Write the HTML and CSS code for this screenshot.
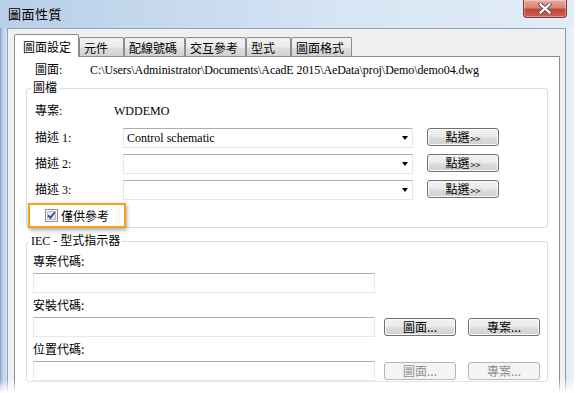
FILE: index.html
```html
<!DOCTYPE html>
<html lang="zh-Hant">

<head>
    <meta charset="utf-8">
    <meta name="viewport" content="width=device-width, initial-scale=1.0">
    <title>圖面性質</title>
    <link rel="stylesheet" href="styles.css">
</head>

<body>
    <div class="window">
        <div class="titlebar">
            <h1>圖面性質</h1>
            <button class="close">
                <svg width="14" height="11" viewBox="0 0 14 11">
                    <path d="M2.5 1.5 L11.5 9.5 M11.5 1.5 L2.5 9.5" stroke="#5d5d5d" stroke-width="4.2" stroke-linecap="square" fill="none" />
                    <path d="M2.5 1.5 L11.5 9.5 M11.5 1.5 L2.5 9.5" stroke="#fff" stroke-width="2.2" stroke-linecap="square" fill="none" />
                </svg>
            </button>
        </div>
        <div class="frame">
            <div class="client">
                <nav class="tabs">
                    <span class="tab selected">圖面設定</span>
                    <span class="tab">元件</span>
                    <span class="tab">配線號碼</span>
                    <span class="tab">交互參考</span>
                    <span class="tab">型式</span>
                    <span class="tab">圖面格式</span>
                </nav>
                <section class="page">
                    <p class="path"><span class="path-label">圖面:</span>C:\Users\Administrator\Documents\AcadE 2015\AeData\proj\Demo\demo04.dwg</p>

                    <fieldset class="group drawing">
                        <legend>圖檔</legend>
                        <p class="project"><span class="project-label">專案:</span>WDDEMO</p>
                        <div class="desc-grid">
                            <span>描述 1:</span>
                            <div class="combo">Control schematic<span class="arrow"></span></div>
                            <button class="btn">點選<small>&gt;&gt;</small></button>

                            <span>描述 2:</span>
                            <div class="combo"><span class="arrow"></span></div>
                            <button class="btn">點選<small>&gt;&gt;</small></button>

                            <span>描述 3:</span>
                            <div class="combo"><span class="arrow"></span></div>
                            <button class="btn">點選<small>&gt;&gt;</small></button>
                        </div>
                        <label class="note">
                            <svg class="check" width="13" height="13" viewBox="0 0 13 13">
                                <rect x="0.5" y="0.5" width="12" height="12" fill="#fff" stroke="#8e8f8f" />
                                <rect x="2.5" y="2.5" width="8" height="8" fill="#e6e9ee" stroke="#b9bdc3" />
                                <path d="M3.2 6.4 L5.4 8.8 L9.8 3.2" stroke="#2b4a8c" stroke-width="1.8" fill="none" />
                            </svg>
                            僅供參考
                        </label>
                    </fieldset>

                    <fieldset class="group iec">
                        <legend>IEC - 型式指示器</legend>
                        <p class="field-label">專案代碼:</p>
                        <div class="field-row">
                            <div class="textbox"></div>
                        </div>
                        <p class="field-label">安裝代碼:</p>
                        <div class="field-row">
                            <div class="textbox"></div>
                            <button class="btn">圖面...</button>
                            <button class="btn">專案...</button>
                        </div>
                        <p class="field-label">位置代碼:</p>
                        <div class="field-row">
                            <div class="textbox"></div>
                            <button class="btn" disabled>圖面...</button>
                            <button class="btn" disabled>專案...</button>
                        </div>
                    </fieldset>
                </section>
            </div>
        </div>
    </div>
    <div class="fade"></div>
</body>

</html>
```

FILE: styles.css
```css
body {
    margin: 0;
    background-color: #fff;
    font-family: "Liberation Serif", "Noto Sans CJK TC", serif;
    font-size: 12px;
    line-height: 16px;
    color: #000;
    overflow: hidden;
}

p {
    margin: 0;
}

.window {
    width: 574px;
    height: 393px;
    display: flex;
    flex-direction: column;
}

/* title bar */
.titlebar {
    height: 28px;
    flex-shrink: 0;
    display: flex;
    align-items: flex-start;
    justify-content: space-between;
    background: linear-gradient(90deg, #b9cfe8 0, #c6d9ee 30%, #d7e5f4 60%, #e2ecf7 100%);
}

.titlebar h1 {
    margin: 6px 0 0 8px;
    font-family: "Noto Sans CJK TC", sans-serif;
    font-size: 13px;
    font-weight: normal;
    line-height: 16px;
    letter-spacing: 0.5px;
}

.close {
    width: 44px;
    height: 18px;
    margin-right: 7px;
    padding: 0;
    display: flex;
    align-items: center;
    justify-content: center;
    border: 1px solid #7d3a34;
    border-top: none;
    border-radius: 0 0 4px 4px;
    background: linear-gradient(#e6aaa2 0, #d98378 45%, #c4463a 55%, #cf5f52 100%);
    box-shadow: inset 0 0 0 1px rgba(255, 255, 255, 0.35);
}

/* window frame */
.frame {
    flex: 1;
    display: flex;
    padding: 0 8px 0 7px;
    background: linear-gradient(90deg, #7f9cc2 0, #b3cbe6 2px, #cbdbee 5px, #cfdef0 7px, #dfe9f5 calc(100% - 8px), #eef3f9 100%);
}

.client {
    flex: 1;
    display: flex;
    flex-direction: column;
    padding: 5px 5px 0 6px;
    background-color: #f0f0f0;
    border: 1px solid #8ea3be;
    border-bottom: none;
}

/* tabs */
.tabs {
    display: flex;
    align-items: flex-end;
    height: 23px;
    margin-bottom: -1px;
    font-family: "Noto Sans CJK TC", sans-serif;
}

.tab {
    box-sizing: border-box;
    min-width: 45px;
    height: 20px;
    padding: 1px 7px 0 4px;
    line-height: 17px;
    border: 1px solid #898c95;
    border-bottom: none;
    border-radius: 2px 2px 0 0;
    background: linear-gradient(#f2f2f2 0, #ebebeb 45%, #dddddd 55%, #cfcfcf 100%);
}

.tab.selected {
    position: relative;
    z-index: 1;
    height: 23px;
    padding: 3px 7px 0 8px;
    background: #fff;
}

.page {
    flex: 1;
    padding: 5px 11px 0 11px;
    background-color: #fff;
    border: 1px solid #898c95;
    border-bottom: none;
}

.path {
    padding-left: 9px;
    letter-spacing: -0.08px;
}

.path-label {
    display: inline-block;
    width: 55px;
    letter-spacing: 0;
}

/* group boxes */
.group {
    margin: 2px 0 0;
    padding: 0 8px 0 8px;
    border: 1px solid #d5dfe5;
    border-radius: 3px;
}

.group legend {
    margin-left: -4px;
    padding: 0 2px;
    line-height: 16px;
}

.project {
    margin-top: 7px;
}

.project-label {
    display: inline-block;
    width: 79px;
}

.desc-grid {
    display: grid;
    grid-template-columns: 74px 290px 72px;
    grid-auto-rows: 20px;
    column-gap: 14px;
    row-gap: 6px;
    align-items: center;
    margin-top: 9px;
}

.combo {
    box-sizing: border-box;
    height: 20px;
    display: flex;
    align-items: center;
    padding-left: 3px;
    border: 1px solid #e3e9ef;
    border-top-color: #abadb3;
    background-color: #fff;
}

.arrow {
    margin-left: auto;
    margin-right: 4px;
    border-left: 3.5px solid transparent;
    border-right: 3.5px solid transparent;
    border-top: 4px solid #000;
}

.btn {
    box-sizing: border-box;
    width: 72px;
    height: 18px;
    padding: 0;
    font-family: "Noto Sans CJK TC", sans-serif;
    font-size: 12px;
    line-height: 16px;
    color: #000;
    border: 1px solid #707070;
    border-radius: 3px;
    background: linear-gradient(#f2f2f2 0, #ebebeb 45%, #dddddd 55%, #cfcfcf 100%);
    box-shadow: inset 0 0 0 1px #fbfbfb;
}

.desc-grid .btn {
    align-self: start;
}

.btn small {
    font-size: 9px;
    margin-left: 1px;
}

.btn:disabled {
    color: #8d8d8d;
    border-color: #b3b7ba;
    background: #f4f4f4;
    box-shadow: none;
}

/* callout round the checkbox */
.note {
    box-sizing: border-box;
    width: 98px;
    height: 25px;
    margin: 3px 0 -1px -7px;
    padding-left: 15px;
    display: flex;
    align-items: center;
    gap: 3px;
    font-family: "Noto Sans CJK TC", sans-serif;
    border: 2px solid #f6a01a;
    box-shadow: 1px 2px 4px rgba(0, 0, 0, 0.35);
}

.check {
    flex-shrink: 0;
}

.iec {
    margin-top: 5px;
    padding: 0 6px;
}

.field-label {
    margin-top: 4px;
    font-family: "Noto Sans CJK TC", sans-serif;
}

.field-row {
    display: flex;
    align-items: center;
    height: 20px;
    margin-top: 4px;
}

.textbox {
    box-sizing: border-box;
    width: 342px;
    height: 20px;
    border: 1px solid #e3e9ef;
    border-top-color: #abadb3;
    background-color: #fff;
}

.field-row .btn {
    margin-left: 9px;
}

.field-row .btn + .btn {
    margin-left: 12px;
}

.fade {
    position: absolute;
    left: 0;
    right: 0;
    bottom: 0;
    height: 14px;
    background: linear-gradient(rgba(255, 255, 255, 0), #fff);
}
```
